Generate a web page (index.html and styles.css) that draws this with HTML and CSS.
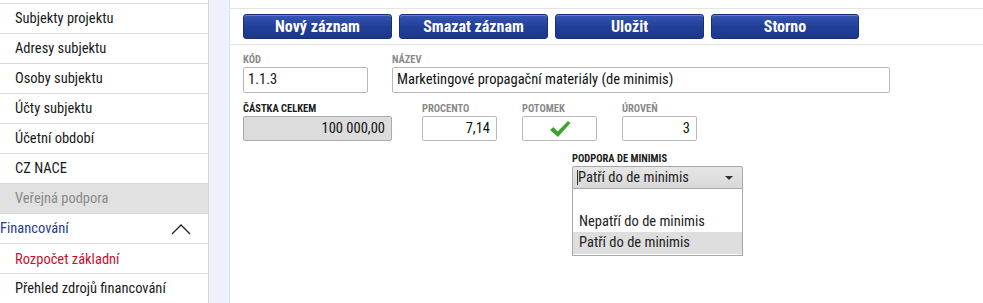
FILE: index.html
```html
<!DOCTYPE html>
<html lang="cs">
<head>
<meta charset="utf-8">
<link rel="stylesheet" href="styles.css">
</head>
<body>
<div class="page">
  <nav class="sidebar">
    <div class="item">Subjekty projektu</div>
    <div class="item">Adresy subjektu</div>
    <div class="item">Osoby subjektu</div>
    <div class="item">Účty subjektu</div>
    <div class="item">Účetní období</div>
    <div class="item">CZ NACE</div>
    <div class="item disabled">Veřejná podpora</div>
    <div class="item group">Financování
      <svg class="chev" width="20" height="12" viewBox="0 0 20 12"><path d="M1 11 L10 2 L19 11" fill="none" stroke="#222" stroke-width="1.3"/></svg>
    </div>
    <div class="item active">Rozpočet základní</div>
    <div class="item">Přehled zdrojů financování</div>
  </nav>
  <div class="strip"></div>
  <main class="main">
    <div class="toolbar">
      <button class="btn">Nový záznam</button>
      <button class="btn">Smazat záznam</button>
      <button class="btn">Uložit</button>
      <button class="btn">Storno</button>
    </div>
    <div class="row row1">
      <div class="field f-kod">
        <div class="label">Kód</div>
        <div class="input">1.1.3</div>
      </div>
      <div class="field f-nazev">
        <div class="label">Název</div>
        <div class="input">Marketingové propagační materiály (de minimis)</div>
      </div>
    </div>
    <div class="row row2">
      <div class="field f-castka">
        <div class="label dark">Částka celkem</div>
        <div class="input num readonly">100 000,00</div>
      </div>
      <div class="field f-small">
        <div class="label">Procento</div>
        <div class="input num">7,14</div>
      </div>
      <div class="field f-small">
        <div class="label">Potomek</div>
        <div class="input check">
          <svg width="22" height="18" viewBox="0 0 22 18"><path d="M1 10 L4.5 7 L8.5 11.5 L19 1 L21.5 3 L9 17 Z" fill="#3aa335"/></svg>
        </div>
      </div>
      <div class="field f-small">
        <div class="label">Úroveň</div>
        <div class="input num">3</div>
      </div>
    </div>
    <div class="row row3">
      <div class="field f-select">
        <div class="label dark">Podpora de minimis</div>
        <div class="select"><span class="caret"></span>Patří do de minimis<span class="arrow"></span></div>
        <div class="listbox">
          <div class="opt empty"></div>
          <div class="opt">Nepatří do de minimis</div>
          <div class="opt sel">Patří do de minimis</div>
        </div>
      </div>
    </div>
  </main>
</div>
</body>
</html>
```

FILE: styles.css
```css
* { box-sizing: border-box; }
html, body { margin: 0; padding: 0; background: #fff; }
body {
  font-family: "Roboto Condensed", "Liberation Sans Narrow", "DejaVu Sans Condensed", Roboto, sans-serif;
  color: #222;
  width: 983px;
  height: 303px;
  overflow: hidden;
}
.page { display: flex; height: 303px; }
.sidebar {
  width: 209px;
  flex: none;
  border-right: 1px solid #d6d6d6;
  padding-top: 3px;
}
.item {
  height: 30px;
  border-top: 1px solid #d9d9d9;
  padding-left: 15px;
  font-size: 14.5px;
  line-height: 29px;
  color: #1a1a1a;
  display: flex;
  align-items: center;
}
.item.disabled { background: #e1e1e1; color: #8a8a8a; }
.item.group { padding-left: 0; color: #1f3d8f; justify-content: space-between; padding-right: 17px; }
.item.active { color: #c8102e; padding-top: 2px; }
.strip {
  width: 21px;
  flex: none;
  background: #eef0fb;
  border-right: 1px solid #dcdff0;
}
.main { flex: 1; padding-top: 8px; }
.toolbar {
  border-top: 1px solid #e4e4e4;
  border-bottom: 1px solid #e4e4e4;
  padding: 5px 0 5px 13px;
  display: flex;
  gap: 7px;
}
.btn {
  width: 149px;
  height: 25px;
  border: 1px solid #16307a;
  border-radius: 3px;
  background: linear-gradient(#3657b5, #223f98 50%, #1c378a);
  color: #fff;
  font-family: inherit;
  font-weight: bold;
  font-size: 16px;
  padding: 0;
  box-shadow: inset 0 1px 0 rgba(255,255,255,0.25);
}
.btn:last-child { width: 148px; }
.row { display: flex; padding-left: 13px; }
.row1 { margin-top: 8px; gap: 24px; }
.row2 { margin-top: 9px; }
.row3 { margin-top: 11px; padding-left: 342px; }
.label {
  font-size: 10.5px;
  font-weight: bold;
  text-transform: uppercase;
  color: #8a8a8a;
  height: 14px;
  line-height: 14px;
}
.label.dark { color: #1a1a1a; }
.input {
  height: 26px;
  border: 1px solid #b9b9b9;
  border-radius: 2px;
  background: #fff;
  font-size: 14.5px;
  line-height: 24px;
  padding: 0 4px;
  color: #111;
  white-space: nowrap;
}
.f-kod { width: 125px; }
.f-nazev { width: 498px; }
.num { text-align: right; padding-right: 6px; }
.readonly { background: #dcdcdc; border-color: #aaa; }
.row2 .input { height: 25px; }
.f-castka { width: 149px; margin-right: 30px; }
.f-small { width: 75px; margin-right: 25px; }
.check { display: flex; justify-content: center; align-items: center; }
.f-select { width: 171px; }
.select {
  height: 23px;
  border: 1px solid #a8a8a8;
  border-radius: 2px 2px 0 0;
  background: linear-gradient(#e6e6e6, #d8d8d8);
  font-size: 14.5px;
  line-height: 21px;
  padding-left: 4px;
  position: relative;
  display: flex;
  align-items: center;
}
.caret { display: inline-block; width: 1px; height: 15px; background: #333; }
.arrow {
  position: absolute;
  right: 9px;
  top: 9px;
  border-left: 4px solid transparent;
  border-right: 4px solid transparent;
  border-top: 4px solid #333;
}
.listbox {
  border: 1px solid #a8a8a8;
  border-top: none;
  height: 67px;
}
.opt { font-size: 14.5px; height: 22px; line-height: 22px; padding-left: 6px; }
.opt.empty { height: 20px; }
.opt.sel { background: #dedede; margin-top: 1px; }
.opt:nth-child(2) { padding-top: 2px; }
```
